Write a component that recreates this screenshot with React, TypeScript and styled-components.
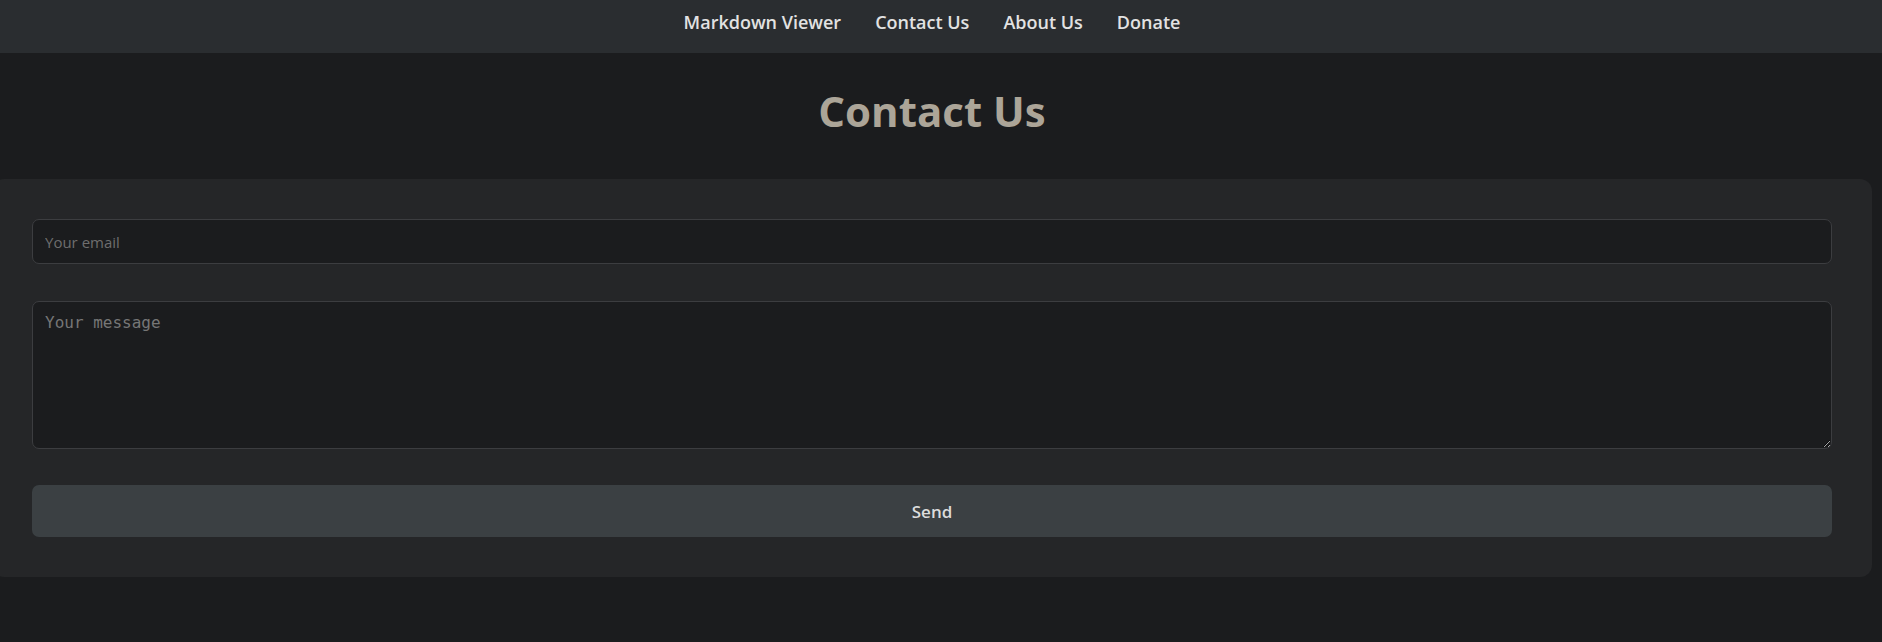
import styled, { createGlobalStyle } from "styled-components"

const Global = createGlobalStyle`
    html, body {
        margin: 0;
        padding: 0;
        background-color: #1b1c1e;
        font-family: "Open Sans", "Noto Sans", sans-serif;
        overflow: hidden;
    }
    * {
        box-sizing: border-box;
    }
`

const links = ["Markdown Viewer", "Contact Us", "About Us", "Donate"]

export default function App() {
    return (
        <Page>
            <Global />
            <NavBar>
                {links.map((l) => (
                    <NavLink key={l} href="#">{l}</NavLink>
                ))}
            </NavBar>
            <Main>
                <Title>Contact Us</Title>
                <Card>
                    <EmailInput type="email" placeholder="Your email" />
                    <MessageArea placeholder="Your message" />
                    <SendButton type="button">Send</SendButton>
                </Card>
            </Main>
        </Page>
    )
}

const Page = styled.div`
    min-height: 642px;
    background-color: #1b1c1e;
`
const NavBar = styled.nav`
    height: 53px;
    background-color: #2a2d30;
    display: flex;
    justify-content: center;
    align-items: flex-start;
    padding: 13px 18px 0 0;
    gap: 34px;
`
const NavLink = styled.a`
    color: #e2e2e2;
    text-decoration: none;
    font-size: 18px;
    font-weight: 600;
    line-height: 1;
    cursor: pointer;
`
const Main = styled.main`
    margin: 0 10px 0 -8px;
`
const Title = styled.h1`
    margin: 37px 0 47px;
    text-align: center;
    color: #aca598;
    font-size: 42px;
    font-weight: 700;
    line-height: 42px;
`
const Card = styled.form`
    padding: 40px;
    background-color: #252628;
    border-radius: 12px;
    display: flex;
    flex-direction: column;
`
const EmailInput = styled.input`
    height: 45px;
    padding: 0 12px;
    background-color: #1b1c1e;
    border: 1px solid #3c3d40;
    border-radius: 7px;
    color: #ddd;
    font-family: "Open Sans", sans-serif;
    font-size: 15px;
    outline: none;
    &::placeholder {
        color: #6e6e6e;
    }
`
const MessageArea = styled.textarea`
    margin-top: 37px;
    height: 148px;
    padding: 11px 12px;
    background-color: #1b1c1e;
    border: 1px solid #3c3d40;
    border-radius: 7px;
    color: #ddd;
    font-family: "DejaVu Sans Mono", monospace;
    font-size: 16px;
    outline: none;
    resize: vertical;
    &::placeholder {
        color: #767676;
    }
`
const SendButton = styled.button`
    margin-top: 36px;
    height: 52px;
    background-color: #3b4043;
    border: none;
    border-radius: 7px;
    color: #dcdcdc;
    font-family: "Open Sans", sans-serif;
    font-size: 17px;
    font-weight: 600;
    line-height: 1;
    cursor: pointer;
`
